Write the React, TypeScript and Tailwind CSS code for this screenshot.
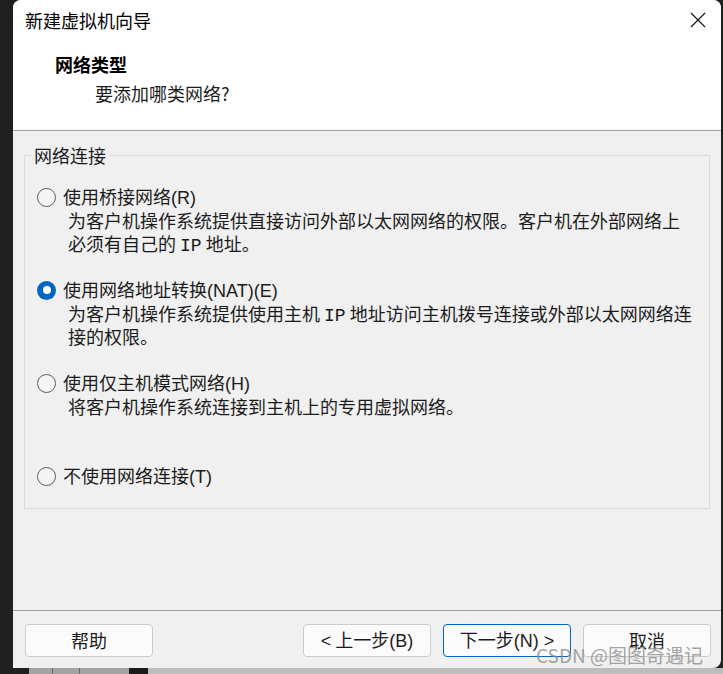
import React from "react"

const font = { fontFamily: '"Noto Sans CJK SC", "Liberation Sans", sans-serif' }

interface OptionProps {
  label: string
  hotkey: string
  lines: React.ReactNode[]
  checked?: boolean
}

function Radio({ checked }: { checked?: boolean }) {
  if (checked) {
    return (
      <span className="flex h-[19px] w-[19px] shrink-0 items-center justify-center rounded-full bg-[#0067c0]">
        <span className="h-[8px] w-[8px] rounded-full bg-white"></span>
      </span>
    )
  }
  return <span className="h-[19px] w-[19px] shrink-0 rounded-full border border-[#5d5d5d] bg-[#f5f5f5]"></span>
}

function Option({ label, hotkey, lines, checked }: OptionProps) {
  return (
    <div>
      <div className="flex h-[24px] items-center">
        <Radio checked={checked} />
        <span className="ml-[7px] text-[18px] text-[#1b1b1b]">
          {label}
          <span className="font-['Liberation_Sans'] text-[18px]">({hotkey})</span>
        </span>
      </div>
      {lines.map((l, i) => (
        <div key={i} className="ml-[31px] h-[23px] text-[18px] leading-[23px] text-[#1b1b1b]">
          {l}
        </div>
      ))}
    </div>
  )
}

function Btn({ children, primary }: { children: React.ReactNode; primary?: boolean }) {
  return (
    <button
      className={
        primary
          ? "h-[33px] w-[128px] rounded-[4px] border border-[#0067c0] bg-[#fbfbfb] text-[18px] text-[#1b1b1b]"
          : "h-[33px] w-[128px] rounded-[4px] border border-[#cccccc] bg-[#fbfbfb] text-[18px] text-[#1b1b1b]"
      }
    >
      {children}
    </button>
  )
}

export default function App() {
  return (
    <div className="relative flex h-[674px] w-[723px] flex-col overflow-hidden bg-[#202020]" style={font}>
      <div className="flex h-[668px]">
        <div className="w-[13px] shrink-0 bg-[#202020]"></div>
        <div className="flex w-[708px] flex-col overflow-hidden rounded-t-[8px] rounded-br-[8px] bg-[#f0f0f0]">
          {/* header */}
          <div className="h-[131px] shrink-0 border-b border-[#a0a0a0] bg-white">
            <div className="flex h-[40px] items-center justify-between pl-[12px] pr-[12px]">
              <span className="text-[18px] text-black">新建虚拟机向导</span>
              <svg width="18" height="18" viewBox="0 0 18 18" className="mr-[2px]">
                <path d="M2 2 L16 16 M16 2 L2 16" stroke="#1b1b1b" strokeWidth="1.3" />
              </svg>
            </div>
            <div className="ml-[42px] mt-[12px] text-[18px] font-bold leading-[24px] text-black">网络类型</div>
            <div className="ml-[82px] mt-[5px] text-[18px] leading-[24px] text-[#1b1b1b]">要添加哪类网络?</div>
          </div>

          {/* body */}
          <div className="flex-1 px-[11px] pt-[14px]">
            <fieldset className="h-[364px] border border-[#d9d9d9]">
              <legend className="ml-[6px] px-[3px] text-[18px] leading-[20px] text-[#1b1b1b]">网络连接</legend>
              <div className="mt-[20px] flex flex-col gap-[23px] pl-[12px]">
                <Option
                  label="使用桥接网络"
                  hotkey="R"
                  lines={[
                    "为客户机操作系统提供直接访问外部以太网网络的权限。客户机在外部网络上",
                    <>
                      必须有自己的 <span className="font-['Liberation_Mono']">IP</span> 地址。
                    </>,
                  ]}
                />
                <Option
                  checked
                  label="使用网络地址转换"
                  hotkey="NAT)(E"
                  lines={[
                    <>
                      为客户机操作系统提供使用主机 <span className="font-['Liberation_Mono']">IP</span> 地址访问主机拨号连接或外部以太网网络连
                    </>,
                    "接的权限。",
                  ]}
                />
                <Option label="使用仅主机模式网络" hotkey="H" lines={["将客户机操作系统连接到主机上的专用虚拟网络。", ""]} />
                <Option label="不使用网络连接" hotkey="T" lines={[]} />
              </div>
            </fieldset>
          </div>

          {/* footer */}
          <div className="h-[58px] shrink-0 border-t border-[#a0a0a0]">
            <div className="flex items-center pl-[12px] pt-[13px]">
              <Btn>帮助</Btn>
              <div className="ml-[150px] flex gap-[12px]">
                <Btn>
                  <span className="font-['Liberation_Sans']">&lt;</span> 上一步<span className="font-['Liberation_Sans']">(B)</span>
                </Btn>
                <Btn primary>
                  下一步<span className="font-['Liberation_Sans']">(N) &gt;</span>
                </Btn>
                <Btn>取消</Btn>
              </div>
            </div>
          </div>
        </div>
      </div>
      <div className="flex h-[6px]">
        <div className="w-[29px] bg-[#202020]"></div>
        <div className="w-[24px] border-r border-[#6a6a6a] bg-[#a3a3a3]"></div>
        <div className="w-[27px] border-r border-[#6a6a6a] bg-[#a3a3a3]"></div>
        <div className="w-[49px] bg-[#a3a3a3]"></div>
        <div className="w-[19px] bg-[#1a1a1a]"></div>
        <div className="flex-1 bg-[#bdbdbd]"></div>
      </div>

      <div className="pointer-events-none absolute left-[536px] top-[643px] text-[19px] leading-[24px] text-[#8c8c8c]/80">
        CSDN @图图奇遇记
      </div>
    </div>
  )
}
